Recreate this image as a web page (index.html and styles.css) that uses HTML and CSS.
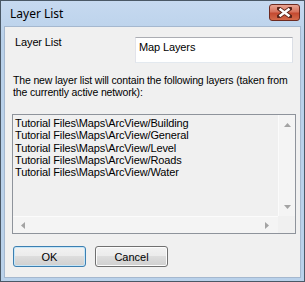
FILE: index.html
```
<!DOCTYPE html>
<html lang="en">

<head>
    <meta charset="UTF-8">
    <title>Layer List</title>
    <link rel="stylesheet" href="styles.css">
</head>

<body>

    <div class="window">
        <div class="titlebar">
            <span class="title">Layer List</span>
            <div class="close">
                <svg width="15" height="11" viewBox="0 0 15 11">
                    <path d="M2 1.5 L13 9.5 M13 1.5 L2 9.5" stroke="#5a2318" stroke-width="4.2" stroke-linecap="square" />
                    <path d="M2.5 1.8 L12.5 9.2 M12.5 1.8 L2.5 9.2" stroke="#fff" stroke-width="2.4" />
                </svg>
            </div>
        </div>

        <div class="client">
            <div class="name-row">
                <label for="listName">Layer List</label>
                <div class="textbox" id="listName">Map Layers</div>
            </div>

            <p class="info">The new layer list will contain the following layers (taken from<br>the currently active network):</p>

            <div class="listbox">
                <div class="items">
                    <div>Tutorial Files\Maps\ArcView/Building</div>
                    <div>Tutorial Files\Maps\ArcView/General</div>
                    <div>Tutorial Files\Maps\ArcView/Level</div>
                    <div>Tutorial Files\Maps\ArcView/Roads</div>
                    <div>Tutorial Files\Maps\ArcView/Water</div>
                </div>
                <div class="vscroll">
                    <svg width="7" height="4" viewBox="0 0 7 4"><path d="M0 4 L3.5 0 L7 4 Z" fill="#a3a3a3" /></svg>
                    <svg width="7" height="4" viewBox="0 0 7 4"><path d="M0 0 L3.5 4 L7 0 Z" fill="#a3a3a3" /></svg>
                </div>
                <div class="hscroll">
                    <svg width="4" height="7" viewBox="0 0 4 7"><path d="M4 0 L0 3.5 L4 7 Z" fill="#a3a3a3" /></svg>
                    <svg width="4" height="7" viewBox="0 0 4 7"><path d="M0 0 L4 3.5 L0 7 Z" fill="#a3a3a3" /></svg>
                </div>
                <div class="corner"></div>
            </div>

            <div class="buttons">
                <button class="default">OK</button>
                <button>Cancel</button>
            </div>
        </div>
    </div>

</body>

</html>
```

FILE: styles.css
```
body {
    margin: 0;
    padding: 0;
    font-family: "Liberation Sans", Arial, sans-serif;
    font-size: 11px;
    letter-spacing: -0.12px;
    color: #000;
}

.window {
    width: 305px;
    height: 282px;
    box-sizing: border-box;
    border: 1px solid #4a5866;
    background: linear-gradient(#c6d9f0, #b9d1ea 40px);
    padding: 0 3px 3px 3px;
    display: flex;
    flex-direction: column;
}

.titlebar {
    height: 25px;
    display: flex;
    align-items: flex-start;
    justify-content: space-between;
    padding-left: 6px;
    padding-right: 1px;
}

.title {
    font-family: "Noto Sans", "Open Sans", sans-serif;
    font-size: 12px;
    letter-spacing: 0;
    line-height: 14px;
    margin-top: 6px;
}

.close {
    width: 31px;
    height: 17px;
    box-sizing: border-box;
    margin-top: 3px;
    border: 1px solid #6d2a20;
    border-radius: 3px;
    background: linear-gradient(#e8a493, #d7735e 45%, #c44a31 55%, #d46a4a);
    display: flex;
    align-items: center;
    justify-content: center;
}

.client {
    flex: 1;
    background-color: #f0f0f0;
    border: 1px solid #a5b8cf;
    box-sizing: border-box;
    padding: 9px 0 0 7px;
}

.name-row {
    display: grid;
    grid-template-columns: 120px 158px;
    margin-left: 3px;
    line-height: 13px;
}

.textbox {
    margin-top: 1px;
    height: 26px;
    box-sizing: border-box;
    background-color: #fff;
    border: 1px solid #abadb3;
    border-color: #abadb3 #dbdfe6 #e3e9ef #e2e3ea;
    padding: 3px 3px;
}

.info {
    margin: 11px 0 0 1px;
    font-size: 10.5px;
    letter-spacing: -0.15px;
    line-height: 12px;
    white-space: nowrap;
}

.listbox {
    margin-top: 16px;
    width: 284px;
    height: 120px;
    box-sizing: border-box;
    border: 1px solid #8e939b;
    display: grid;
    grid-template-columns: 1fr 17px;
    grid-template-rows: 1fr 17px;
}

.items {
    padding: 2px 0 0 2px;
    line-height: 12.3px;
}

.vscroll {
    background-color: #f4f4f4;
    border-left: 1px solid #fbfbfb;
    display: flex;
    flex-direction: column;
    align-items: center;
    justify-content: space-between;
    padding: 8px 0 7px;
}

.hscroll {
    background-color: #f4f4f4;
    border-top: 1px solid #fbfbfb;
    display: flex;
    align-items: center;
    justify-content: space-between;
    padding: 0 9px 0 8px;
}

.corner {
    background-color: #f0f0f0;
}

.buttons {
    display: flex;
    gap: 9px;
    margin: 12px 0 0 1px;
}

button {
    width: 73px;
    height: 21px;
    font-family: "Liberation Sans", Arial, sans-serif;
    font-size: 11px;
    color: #000;
    border: 1px solid #707070;
    border-radius: 3px;
    background: linear-gradient(#f2f2f2, #ebebeb 50%, #dddddd 50%, #cfcfcf);
    box-shadow: inset 0 0 0 1px #fcfcfc;
    padding: 0;
}

button.default {
    border-color: #3c7fb1;
    box-shadow: inset 0 0 0 1px #c6e6f8;
}
```
